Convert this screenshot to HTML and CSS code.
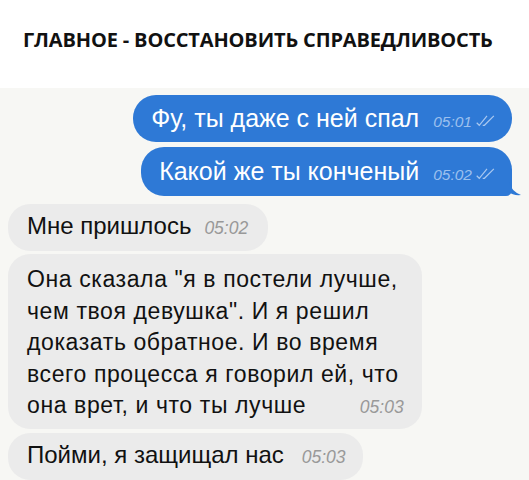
FILE: index.html
```html
<!DOCTYPE html>
<html lang="ru">
<head>
    <meta charset="UTF-8">
    <meta name="viewport" content="width=device-width, initial-scale=1.0">
    <title>Главное - восстановить справедливость</title>
    <link rel="stylesheet" href="styles.css">
</head>
<body>
    <header class="caption">
        <h1>ГЛАВНОЕ - ВОССТАНОВИТЬ СПРАВЕДЛИВОСТЬ</h1>
    </header>

    <div class="chat">
        <div class="msg out">
            <span class="text">Фу, ты даже с ней спал</span>
            <span class="time">05:01<svg class="ticks" viewBox="0 0 26 14"><path d="M1 9 L4 12 L13 1 M8 12 L10 12 L21 1"/></svg></span>
        </div>
        <div class="msg out tail">
            <span class="text">Какой же ты конченый</span>
            <span class="time">05:02<svg class="ticks" viewBox="0 0 26 14"><path d="M1 9 L4 12 L13 1 M8 12 L10 12 L21 1"/></svg></span>
            <svg class="tail-mark" viewBox="0 0 14 14"><path d="M0 0 L2 0 Q4 9 14 13 Q6 14 0 9 Z"/></svg>
        </div>

        <div class="msg in first">
            <span class="text">Мне пришлось</span>
            <span class="time">05:02</span>
        </div>
        <div class="msg in long">
            <p class="text">Она сказала "я в постели лучше,<br>чем твоя девушка". И я решил<br>доказать обратное. И во время<br>всего процесса я говорил ей, что</p>
            <div class="last-line">
                <span class="text">она врет, и что ты лучше</span>
                <span class="time">05:03</span>
            </div>
        </div>
        <div class="msg in">
            <span class="text">Пойми, я защищал нас</span>
            <span class="time">05:03</span>
        </div>
    </div>
</body>
</html>
```

FILE: styles.css
```css
body {
    margin: 0;
    background: #fff;
    font-family: "Liberation Sans", Arial, sans-serif;
    overflow: hidden;
}
.caption {
    height: 88px;
    padding-left: 23px;
    box-sizing: border-box;
    padding-top: 26px;
}
.caption h1 {
    margin: 0;
    font-family: "Open Sans", sans-serif;
    font-weight: 700;
    font-size: 20px;
    letter-spacing: -0.15px;
    color: #111;
    white-space: nowrap;
}
.chat {
    background: #f7f7f4;
    padding: 7px 17px 0 8px;
    display: flex;
    flex-direction: column;
    align-items: flex-start;
    height: 400px;
}
.msg {
    display: flex;
    align-items: baseline;
    border-radius: 23px;
    position: relative;
}
.msg .time {
    font-style: italic;
}
.out {
    align-self: flex-end;
    background: #2e79d6;
    color: #fff;
    font-size: 25px;
    line-height: 29px;
    padding: 9px 12px 9px 18px;
    margin-bottom: 5px;
}
.out .time {
    color: #9cc0ee;
    font-size: 15.5px;
    line-height: 16px;
    margin-left: 14px;
    display: flex;
    align-items: baseline;
}
.ticks {
    width: 26px;
    height: 12px;
    margin-left: 2px;
    fill: none;
    stroke: #a9c8f0;
    stroke-width: 1.4;
}
.tail {
    border-bottom-right-radius: 6px;
    padding-top: 10px;
    padding-bottom: 10px;
    margin-bottom: 8px;
}
.tail-mark {
    position: absolute;
    right: -9px;
    bottom: 0;
    width: 14px;
    height: 14px;
    fill: #2e79d6;
}
.in {
    background: #ebebeb;
    color: #111;
    font-size: 24px;
    line-height: 28px;
    padding: 8px 17px 9px 19px;
    margin-bottom: 4px;
    border-radius: 22px;
}
.in .time {
    color: #999;
    font-size: 17.5px;
    margin-left: 18px;
}
.first {
    padding-right: 20px;
    margin-bottom: 3px;
}
.first .time {
    margin-left: 13px;
}
.long {
    display: block;
    font-size: 23px;
    letter-spacing: 0.6px;
    line-height: 31.5px;
    padding: 10px 23px 5px 19px;
}
.long p {
    margin: 0;
}
.last-line {
    display: flex;
    justify-content: space-between;
    align-items: baseline;
}
.last-line .time {
    letter-spacing: 0;
    margin-right: -5px;
}
```
